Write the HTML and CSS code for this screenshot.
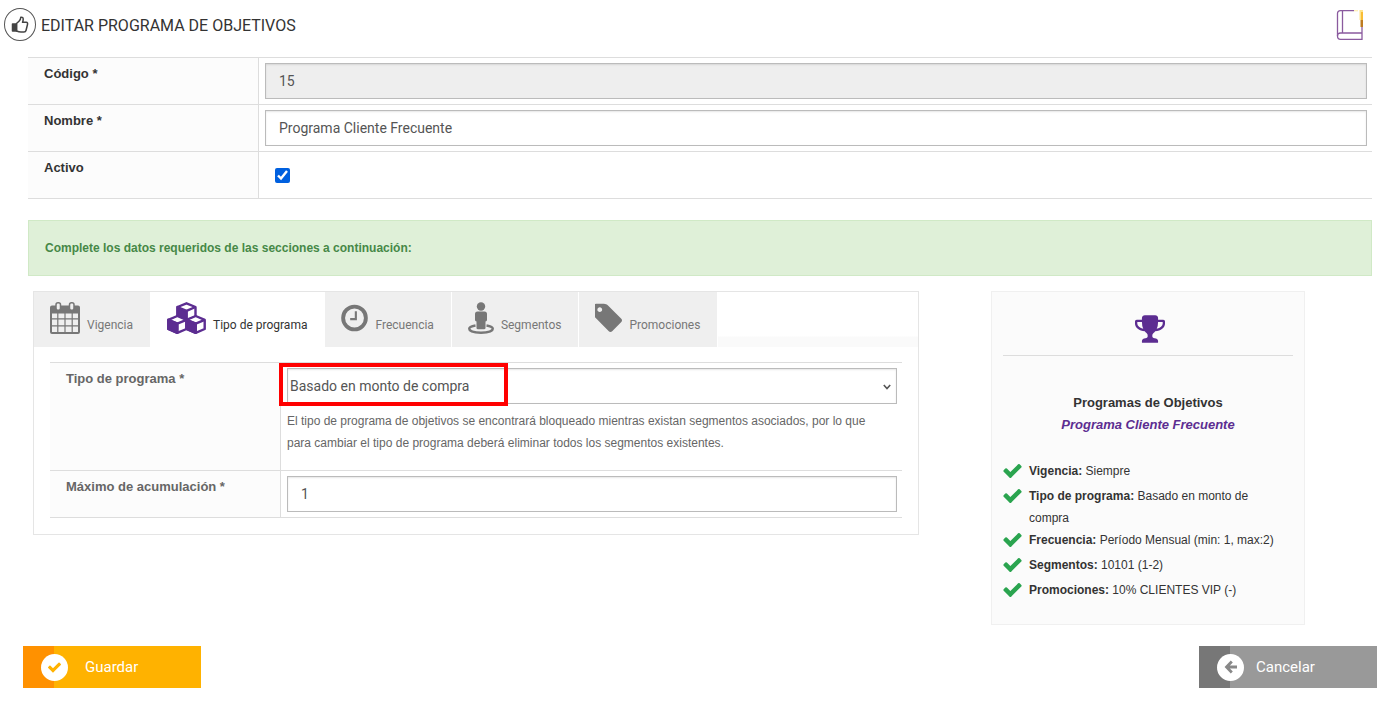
FILE: index.html
```html
<!DOCTYPE html>
<html lang="es">
<head>
    <meta charset="UTF-8">
    <meta name="viewport" content="width=device-width, initial-scale=1.0">
    <title>Editar programa de objetivos</title>
    <link rel="stylesheet" href="styles.css">
</head>
<body>

    <header class="page-header">
        <span class="header-icon">
            <svg width="18" height="18" viewBox="0 0 18 18" fill="none" stroke="#444" stroke-width="1.5" stroke-linejoin="round">
                <path d="M5.500 7.500L8 5.200Q9.600 3.800 9.800 1.200Q12.300 0.800 12.200 3.400Q12.100 5 11.500 6.300H15.200Q17 6.400 16.500 8.500L15 14.500Q14.600 16 13 16H10Q8 16 5.500 15Z"/>
                <path d="M1.500 8h4v7h-4z" fill="#444"/>
            </svg>
        </span>
        <h1>EDITAR PROGRAMA DE OBJETIVOS</h1>
        <a class="manual-link" href="#" aria-label="Manual">
            <svg width="28" height="32" viewBox="0 0 28 32" fill="none" stroke="#8a5a9e" stroke-width="1.3">
                <path d="M18 1.700H4.500Q1.500 1.700 1.500 4.500V27Q1.500 30.300 4.500 30.300H26V18"/>
                <path d="M6.500 2V24M26 24H4.500Q1.500 24 1.500 27"/>
                <path d="M18 1.700H22" stroke="#fff0b8"/>
                <path d="M23.500 1h3.500v10h-3.500z" fill="#ffe38a" stroke="none"/>
                <path d="M25 3h2v9h-2z" fill="#f9bd35" stroke="none"/>
                <path d="M24.500 11h2.500v7h-2.500z" fill="#bd7b20" stroke="none"/>
            </svg>
        </a>
    </header>

    <form>
        <div class="main">
            <div class="form-table">
                <div class="form-row">
                    <label for="codigo">Código *</label>
                    <div class="field"><input type="text" id="codigo" value="15" disabled></div>
                </div>
                <div class="form-row">
                    <label for="nombre">Nombre *</label>
                    <div class="field"><input type="text" id="nombre" value="Programa Cliente Frecuente"></div>
                </div>
                <div class="form-row">
                    <label for="activo">Activo</label>
                    <div class="field field-check"><input type="checkbox" id="activo" checked></div>
                </div>
            </div>

            <div class="alert">Complete los datos requeridos de las secciones a continuación:</div>

            <div class="columns">
                <div class="tab-panel">
                    <div class="tabs">
                        <button type="button" class="tab">
                            <svg width="30" height="32" viewBox="0 0 30 32" fill="currentColor">
                                <path fill-rule="evenodd" d="M2 3.500H28Q30 3.500 30 5.500V30Q30 32 28 32H2Q0 32 0 30V5.500Q0 3.500 2 3.500ZM2 11.500V16.300H7.200V11.500ZM8.400 11.500V16.300H14.400V11.500ZM15.600 11.500V16.300H21.600V11.500ZM22.800 11.500V16.300H28V11.500ZM2 17.500V23.200H7.200V17.500ZM8.400 17.500V23.200H14.400V17.500ZM15.600 17.500V23.200H21.600V17.500ZM22.800 17.500V23.200H28V17.500ZM2 24.400V30H7.200V24.400ZM8.400 24.400V30H14.400V24.400ZM15.600 24.400V30H21.600V24.400ZM22.800 24.400V30H28V24.400Z"/>
                                <rect x="6" y="0.800" width="4.500" height="7.500" rx="2" fill="#efefef" stroke="currentColor" stroke-width="1.500"/>
                                <rect x="19.500" y="0.800" width="4.500" height="7.500" rx="2" fill="#efefef" stroke="currentColor" stroke-width="1.500"/>
                            </svg>
                            <span>Vigencia</span>
                        </button>
                        <button type="button" class="tab active">
                            <svg width="39" height="32" viewBox="0 0 39 32" fill="#fff" stroke="#5c2d91" stroke-width="2.400" stroke-linejoin="round">
                                <path d="M19.500 1.300L28.500 5V14.500L19.500 18.500L10.500 14.500V5Z"/>
                                <path d="M10.500 5L19.500 8.800V18.500L10.500 14.500Z" fill="#5c2d91"/>
                                <path d="M10.500 5L19.500 8.800L28.500 5M19.500 8.800V18"/>
                                <path d="M10.300 14L19.500 17.800V27L10.300 30.800L1.300 27V17.800Z"/>
                                <path d="M1.300 17.800L10.300 21.600V30.800L1.300 27Z" fill="#5c2d91"/>
                                <path d="M1.300 17.800L10.300 21.600L19.500 17.800M10.300 21.600V30" fill="none"/>
                                <path d="M28.700 14L37.700 17.800V27L28.700 30.800L19.500 27V17.800Z"/>
                                <path d="M19.500 17.800L28.700 21.600V30.800L19.500 27Z" fill="#5c2d91"/>
                                <path d="M19.500 17.800L28.700 21.600L37.700 17.800M28.700 21.600V30" fill="none"/>
                            </svg>
                            <span>Tipo de programa</span>
                        </button>
                        <button type="button" class="tab">
                            <svg width="27" height="32" viewBox="0 0 28 32" fill="none" stroke="currentColor">
                                <circle cx="14" cy="16" r="11.800" stroke-width="4"/>
                                <path d="M15.400 9V17.200H9.500" stroke-width="2.200"/>
                            </svg>
                            <span>Frecuencia</span>
                        </button>
                        <button type="button" class="tab">
                            <svg width="26" height="32" viewBox="0 0 26 32" fill="currentColor">
                                <circle cx="13" cy="4.500" r="4.200"/>
                                <path d="M9.500 9.500H16.500Q19 9.500 19 12V18Q19 19.200 17.500 19.500V26Q17.500 27.200 16 27.200H10Q8.500 27.200 8.500 26V19.500Q7 19.200 7 18V12Q7 9.500 9.500 9.500Z"/>
                                <path d="M7.500 23.500Q1.200 24.500 1.200 26.800C1.200 29 6 30.700 13 30.700S24.800 29 24.800 26.800Q24.800 24.500 18.500 23.500" fill="none" stroke="currentColor" stroke-width="2.400"/>
                            </svg>
                            <span>Segmentos</span>
                        </button>
                        <button type="button" class="tab">
                            <svg width="27" height="32" viewBox="192 68 1451 1658" fill="currentColor">
                                <path d="M576 448q0-53-37.500-90.500t-90.500-37.500-90.500 37.500-37.500 90.500 37.500 90.500 90.500 37.500 90.500-37.500 37.500-90.500zm1067 576q0 53-37 90l-491 492q-39 37-91 37-53 0-90-37l-715-716q-38-37-64.500-101t-26.500-117v-416q0-52 38-90t90-38h416q53 0 117 26.500t102 64.500l715 714q37 39 37 91z"/>
                            </svg>
                            <span>Promociones</span>
                        </button>
                    </div>

                    <div class="tab-content">
                        <div class="form-table">
                            <div class="form-row">
                                <label for="tipo">Tipo de programa *</label>
                                <div class="field field-help">
                                    <div class="highlighted">
                                        <select id="tipo">
                                            <option>Basado en monto de compra</option>
                                        </select>
                                        <svg class="chevron" width="8" height="6" viewBox="0 0 8 6" fill="none" stroke="#555" stroke-width="1.600"><path d="M0.800 1L4 4.500L7.200 1"/></svg>
                                        <span class="highlight"></span>
                                    </div>
                                    <p>El tipo de programa de objetivos se encontrará bloqueado mientras existan segmentos asociados, por lo que para cambiar el tipo de programa deberá eliminar todos los segmentos existentes.</p>
                                </div>
                            </div>
                            <div class="form-row">
                                <label for="maximo">Máximo de acumulación *</label>
                                <div class="field"><input type="text" id="maximo" value="1"></div>
                            </div>
                        </div>
                    </div>
                </div>

                <aside class="summary">
                    <div class="summary-icon">
                        <svg width="30" height="28" viewBox="64 128 1664 1536" fill="currentColor">
                            <path d="M522 883q-74-162-74-371h-256v96q0 78 94.500 162t235.500 113zm1078-275v-96h-256q0 209-74 371 141-29 235.500-113t94.500-162zm128-128v128q0 71-41.500 143t-112 130-173 97.500-215.500 44.500q-42 54-95 95-38 34-52.500 72.500t-14.500 89.500q0 54 30.500 91t97.500 37q75 0 133.500 45.500t58.500 114.500v64q0 14-9 23t-23 9h-832q-14 0-23-9t-9-23v-64q0-69 58.500-114.500t133.500-45.500q67 0 97.500-37t30.500-91q0-51-14.500-89.500t-52.500-72.500q-53-41-95-95-113-5-215.500-44.500t-173-97.500-112-130-41.500-143v-128q0-40 28-68t68-28h288v-96q0-66 47-113t113-47h576q66 0 113 47t47 113v96h288q40 0 68 28t28 68z"/>
                        </svg>
                    </div>
                    <h2>Programas de Objetivos</h2>
                    <h3>Programa Cliente Frecuente</h3>
                    <ul>
                        <li>
                            <svg class="check" viewBox="121 334 1550 1188"><use href="#check"/></svg>
                            <div><b>Vigencia:</b> Siempre</div>
                        </li>
                        <li>
                            <svg class="check" viewBox="121 334 1550 1188"><use href="#check"/></svg>
                            <div><b>Tipo de programa:</b> Basado en monto de compra</div>
                        </li>
                        <li>
                            <svg class="check" viewBox="121 334 1550 1188"><use href="#check"/></svg>
                            <div><b>Frecuencia:</b> Período Mensual (min: 1, max:2)</div>
                        </li>
                        <li>
                            <svg class="check" viewBox="121 334 1550 1188"><use href="#check"/></svg>
                            <div><b>Segmentos:</b> 10101 (1-2)</div>
                        </li>
                        <li>
                            <svg class="check" viewBox="121 334 1550 1188"><use href="#check"/></svg>
                            <div><b>Promociones:</b> 10% CLIENTES VIP (-)</div>
                        </li>
                    </ul>
                </aside>
            </div>
        </div>

        <div class="actions">
            <button type="submit" class="btn btn-save">
                <span class="btn-icon">
                    <svg width="13" height="11" viewBox="121 334 1550 1188" fill="currentColor"><use href="#check"/></svg>
                </span>
                Guardar
            </button>
            <button type="button" class="btn btn-cancel">
                <span class="btn-icon">
                    <svg width="14" height="14" viewBox="0 0 14 14" fill="none" stroke="currentColor" stroke-width="2.800"><path d="M7.800 1.500L2.500 7L7.800 12.500M2.500 7H13"/></svg>
                </span>
                Cancelar
            </button>
        </div>
    </form>

    <!-- Shared check mark -->
    <svg class="symbols" aria-hidden="true">
        <symbol id="check" overflow="visible">
            <path d="M1671 566q0 40-28 68l-724 724-136 136q-28 28-68 28t-68-28l-136-136-362-362q-28-28-28-68t28-68l136-136q28-28 68-28t68 28l294 295 656-657q28-28 68-28t68 28l136 136q28 28 28 68z"/>
        </symbol>
    </svg>

</body>
</html>
```
FILE: styles.css
```css
* {
    box-sizing: border-box;
}
body {
    margin: 0;
    background-color: #fff;
    color: #333;
    font-family: "Liberation Sans", Arial, sans-serif;
    font-size: 12px;
    line-height: 22px;
}
.page-header {
    display: flex;
    align-items: center;
    gap: 5px;
    padding: 8px 27px 0 4px;
}
.header-icon {
    display: flex;
    align-items: center;
    justify-content: center;
    width: 32px;
    height: 33px;
    border: 1px solid #555;
    border-radius: 50%;
}
h1 {
    margin: 0;
    padding-top: 2px;
    color: #333;
    font-family: Roboto, sans-serif;
    font-size: 16px;
    font-weight: 400;
}
.manual-link {
    display: flex;
    margin-left: auto;
}
.main {
    padding: 16px 19px 0 28px;
}

/* Label / field rows */
.form-table {
    border-top: 1px solid #ddd;
}
.form-row {
    display: flex;
    min-height: 47px;
    border-bottom: 1px solid #ddd;
}
.form-row label {
    flex: none;
    width: 231px;
    padding: 5px 16px;
    border-right: 1px solid #ddd;
    background-color: #fcfcfc;
    font-size: 13px;
    font-weight: bold;
}
.field {
    flex: 1;
    padding: 5px 5px 5px 6px;
}
.field-check {
    display: flex;
    align-items: center;
    padding-left: 16px;
}
input[type=text], select {
    display: block;
    width: 100%;
    height: 36px;
    border: 1px solid #bbb;
    border-radius: 0;
    background-color: #fff;
    box-shadow: inset 0 1px 2px rgba(0, 0, 0, 0.1);
    color: #555;
    font-family: Roboto, sans-serif;
    font-size: 14px;
}
input[type=text] {
    padding: 0 13px;
}
input[type=text]:disabled {
    background-color: #eee;
}
select {
    appearance: none;
    padding: 0 24px 0 2px;
}
input[type=checkbox] {
    width: 15px;
    height: 15px;
    margin: 0;
    accent-color: #0060df;
}
.alert {
    margin-top: 21px;
    padding: 16px;
    border: 1px solid #d0e9c6;
    background-color: #dff0d8;
    color: #468847;
    font-weight: bold;
}

/* Tabs */
.columns {
    display: grid;
    grid-template-columns: 886fr 314fr;
    align-items: start;
    gap: 72px;
    padding: 15px 67px 0 5px;
}
.tab-panel {
    border: 1px solid #e5e5e5;
}
.tabs {
    display: flex;
    height: 55px;
    background: linear-gradient(#fff 80%, #fafafa 82%);
}
.tab {
    display: flex;
    gap: 7px;
    padding: 10px 17px 0 16px;
    border: 0;
    border-right: 1px solid #fff;
    background-color: #efefef;
    color: #777;
    font-family: Roboto, sans-serif;
    font-size: 12px;
    line-height: 22px;
    white-space: nowrap;
}
.tab span {
    padding-top: 12px;
}
.tab.active {
    background-color: #fff;
    color: #333;
}
.tab-content {
    padding: 15px 16px 16px;
}
.tab-content label {
    color: #666;
}
.highlighted {
    position: relative;
}
.chevron {
    position: absolute;
    top: 16px;
    right: 6px;
    pointer-events: none;
}
.highlight {
    position: absolute;
    top: -5px;
    left: -8px;
    width: 229px;
    height: 43px;
    border: 4px solid #f00;
    pointer-events: none;
}
.field-help {
    padding-bottom: 16px;
}
.field-help p {
    margin: 6px 0 0;
    padding-right: 20px;
    color: #666;
}

/* Summary card */
.summary {
    padding: 23px 11px 20px;
    border: 1px solid #f0f0f0;
    background-color: #fbfbfb;
}
.summary-icon {
    display: flex;
    justify-content: center;
    padding: 0 0 12px 4px;
    border-bottom: 1px solid #ddd;
    color: #5c2d91;
}
h2, h3 {
    margin: 0;
    font-size: 13px;
    text-align: center;
}
h2 {
    margin-top: 36px;
}
h3 {
    color: #5c2d91;
    font-style: italic;
}
.summary ul {
    margin: 24px 0 0;
    padding: 0 8px 0 0;
    list-style: none;
}
.summary li {
    display: flex;
    gap: 7px;
    min-height: 25px;
}
.check {
    flex: none;
    width: 19px;
    height: 14px;
    margin-top: 4px;
    fill: #2aa44f;
}

/* Buttons */
.actions {
    display: flex;
    justify-content: space-between;
    padding: 21px 14px 0 23px;
}
.btn {
    display: flex;
    align-items: center;
    gap: 17px;
    width: 178px;
    height: 42px;
    padding: 0 18px;
    border: 0;
    color: #fff;
    font-family: Roboto, sans-serif;
    font-size: 15px;
}
.btn-save {
    background: linear-gradient(to right, #ff9100 31px, #ffb200 31px);
}
.btn-cancel {
    gap: 12px;
    background: linear-gradient(to right, #777 31px, #999 31px);
}
.btn-icon {
    display: flex;
    align-items: center;
    justify-content: center;
    width: 27px;
    height: 27px;
    border-radius: 50%;
    background-color: #fff;
    color: #ffb200;
}
.btn-cancel .btn-icon {
    color: #888;
}
.symbols {
    display: none;
}
```
